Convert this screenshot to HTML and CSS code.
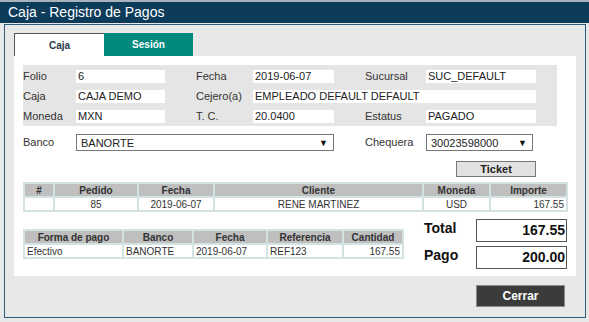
FILE: index.html
```html
<!DOCTYPE html>
<html lang="es">
<head>
    <meta charset="UTF-8">
    <meta name="viewport" content="width=device-width, initial-scale=1.0">
    <title>Caja - Registro de Pagos</title>
    <link rel="stylesheet" href="styles.css">
</head>
<body>
    <div class="topline"></div>
    <div class="titlebar">Caja - Registro de Pagos</div>

    <div class="frame">
        <div class="tabs">
            <div class="tab tab_active">Caja</div>
            <div class="tab tab_teal">Sesión</div>
        </div>

        <div class="panel">
            <div class="info">
                <span class="lbl">Folio</span><span class="val">6</span>
                <span class="lbl pad">Fecha</span><span class="val">2019-06-07</span>
                <span class="lbl pad">Sucursal</span><span class="val">SUC_DEFAULT</span>

                <span class="lbl">Caja</span><span class="val">CAJA DEMO</span>
                <span class="lbl pad">Cejero(a)</span><span class="val wide">EMPLEADO DEFAULT DEFAULT</span>

                <span class="lbl">Moneda</span><span class="val">MXN</span>
                <span class="lbl pad">T. C.</span><span class="val">20.0400</span>
                <span class="lbl pad">Estatus</span><span class="val">PAGADO</span>
            </div>

            <div class="selects">
                <span class="lbl">Banco</span>
                <div class="select wide"><span>BANORTE</span><span class="arrow">▼</span></div>
                <span class="lbl pad">Chequera</span>
                <div class="select"><span>30023598000</span><span class="arrow">▼</span></div>
            </div>

            <div class="ticket_row">
                <button class="ticket">Ticket</button>
            </div>

            <table class="grid orders">
                <tr>
                    <th class="w_num">#</th>
                    <th class="w_pedido">Pedido</th>
                    <th class="w_fecha">Fecha</th>
                    <th>Cliente</th>
                    <th class="w_moneda">Moneda</th>
                    <th class="w_importe">Importe</th>
                </tr>
                <tr>
                    <td></td>
                    <td class="center">85</td>
                    <td class="center">2019-06-07</td>
                    <td class="center">RENE MARTINEZ</td>
                    <td class="center">USD</td>
                    <td class="right">167.55</td>
                </tr>
            </table>

            <div class="bottom">
                <table class="grid payments">
                    <tr>
                        <th class="w_forma">Forma de pago</th>
                        <th class="w_banco">Banco</th>
                        <th class="w_fecha2">Fecha</th>
                        <th class="w_ref">Referencia</th>
                        <th>Cantidad</th>
                    </tr>
                    <tr>
                        <td>Efectivo</td>
                        <td>BANORTE</td>
                        <td>2019-06-07</td>
                        <td>REF123</td>
                        <td class="right">167.55</td>
                    </tr>
                </table>

                <div class="totals">
                    <span class="total_lbl">Total</span>
                    <div class="total_box">167.55</div>
                    <span class="total_lbl">Pago</span>
                    <div class="total_box">200.00</div>
                </div>
            </div>
        </div>

        <div class="close_row">
            <button class="close">Cerrar</button>
        </div>
    </div>
</body>
</html>
```

FILE: styles.css
```css
*{
    box-sizing: border-box;
}
body{
    margin: 0;
    background-color: #e8e8e8;
    font-family: "Liberation Sans", Arial, sans-serif;
    color: #333;
}
.topline{
    height: 2px;
    background-color: #a9b3bb;
}
.titlebar{
    height: 21px;
    line-height: 21px;
    padding-left: 8px;
    background-color: #0d3c5a;
    color: white;
    font-size: 14px;
}
.frame{
    margin: 1px 3px 0 4px;
    border: 1px solid #2d5b7b;
    padding: 8px 0 10px 9px;
}
.tabs{
    display: flex;
    height: 23px;
}
.tab{
    width: 90px;
    font-size: 10px;
    font-weight: bold;
    text-align: center;
    line-height: 23px;
}
.tab_active{
    background-color: white;
    border-left: 1px solid #555;
    border-top: 1px solid #555;
    color: #2a3a4a;
}
.tab_teal{
    width: 89px;
    background-color: #00897e;
    color: white;
}
.panel{
    width: 562px;
    background-color: white;
    padding: 9px 9px 7px 9px;
}
.info{
    display: grid;
    grid-template-columns: 53px 89px 88px 81px 92px 110px;
    grid-auto-rows: 13px;
    row-gap: 7px;
    width: 534px;
    padding: 5px 0 3px 0;
    background-color: #e5e5e5;
    font-size: 11px;
}
.lbl{
    font-size: 11px;
    color: #333;
    line-height: 13px;
    white-space: nowrap;
}
.pad{
    padding-left: 31px;
}
.val{
    background-color: white;
    padding-left: 2px;
    line-height: 13px;
    color: #222;
    white-space: nowrap;
}
.wide{
    grid-column: span 3;
}
.selects{
    display: grid;
    grid-template-columns: 53px 89px 88px 81px 92px 107px;
    align-items: center;
    margin-top: 8px;
    height: 17px;
}
.select{
    height: 17px;
    border: 1px solid #777;
    display: flex;
    justify-content: space-between;
    align-items: center;
    padding: 0 5px 0 4px;
    font-size: 11px;
    color: #222;
}
.arrow{
    font-size: 9px;
    color: #111;
}
.ticket_row{
    display: flex;
    justify-content: flex-end;
    padding-right: 31px;
    margin-top: 10px;
}
.ticket{
    width: 80px;
    height: 16px;
    padding: 0;
    margin: 0;
    background-color: #e2e2e2;
    border: 1px solid #777;
    font-family: "Liberation Sans", Arial, sans-serif;
    font-size: 11px;
    font-weight: bold;
    color: #222;
}
.grid{
    border-collapse: collapse;
    font-size: 10px;
}
.grid th, .grid td{
    border: 2px solid #d3e2e2;
    padding: 0 2px;
    height: 14px;
    color: #333;
    white-space: nowrap;
}
.grid th{
    background-color: #bfbfbf;
    font-weight: bold;
    text-align: center;
}
.center{
    text-align: center;
}
.right{
    text-align: right;
}
.orders{
    width: 545px;
    margin-top: 5px;
}
.w_num{ width: 30px; }
.w_pedido{ width: 84px; }
.w_fecha{ width: 76px; }
.w_moneda{ width: 67px; }
.w_importe{ width: 77px; }
.bottom{
    display: flex;
    align-items: flex-start;
}
.payments{
    width: 382px;
    margin-top: 17px;
}
.w_forma{ width: 99px; }
.w_banco{ width: 70px; }
.w_fecha2{ width: 74px; }
.w_ref{ width: 76px; }
.totals{
    display: grid;
    grid-template-columns: 52px 91px;
    grid-auto-rows: 23px;
    row-gap: 4px;
    margin-left: 20px;
    margin-top: 7px;
}
.total_lbl{
    font-size: 14px;
    font-weight: bold;
    color: #111;
    padding-top: 1px;
}
.total_box{
    border: 1px solid #555;
    text-align: right;
    padding-right: 1px;
    font-size: 14px;
    font-weight: bold;
    line-height: 21px;
    color: #111;
}
.close_row{
    display: flex;
    justify-content: flex-end;
    width: 562px;
    padding-right: 11px;
    margin-top: 9px;
}
.close{
    width: 89px;
    height: 22px;
    margin: 0;
    padding: 0;
    background-color: #3b3b3b;
    border: 1px solid #8a8a8a;
    color: white;
    font-family: "Liberation Sans", Arial, sans-serif;
    font-size: 12px;
    font-weight: bold;
}
```
